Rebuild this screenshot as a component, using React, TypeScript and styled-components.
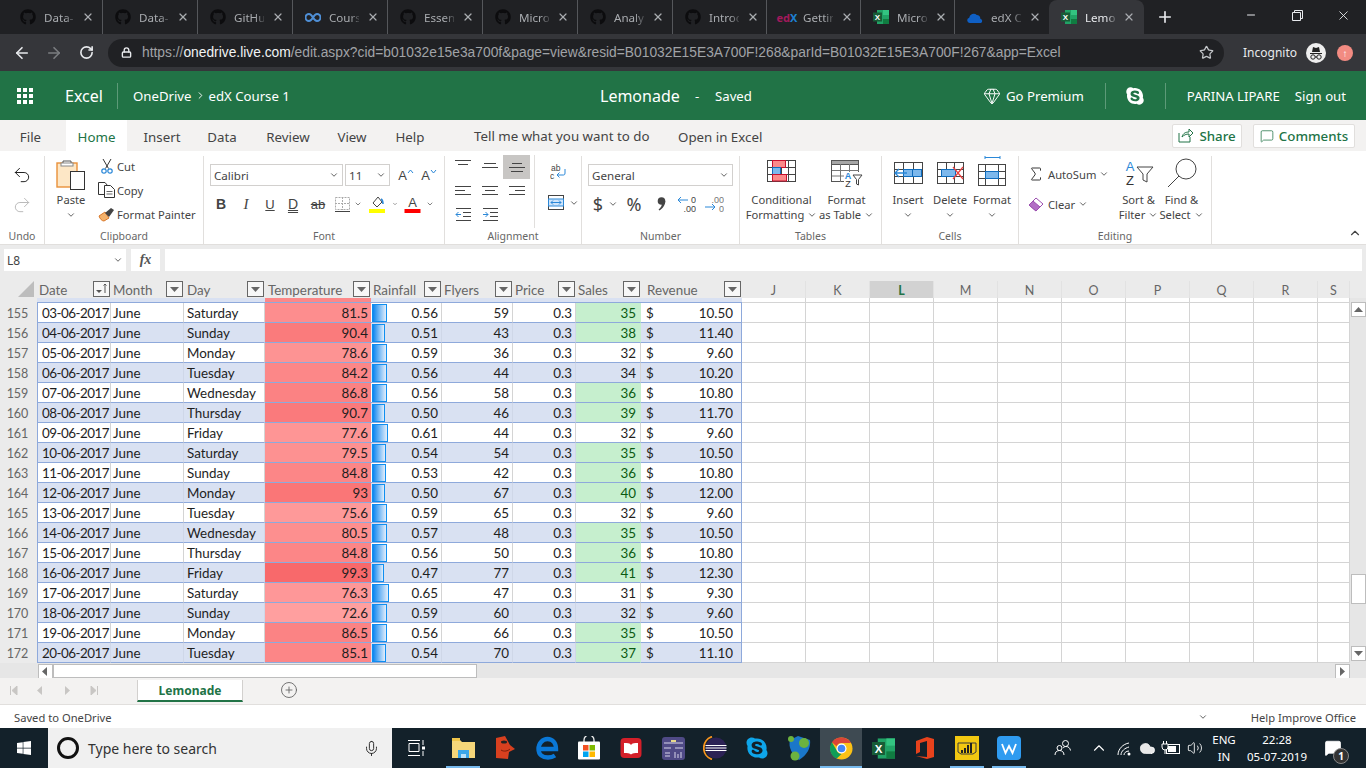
import React from 'react';
import styled, { createGlobalStyle } from 'styled-components';
import {
  ArrowLeft, ArrowRight, RotateCw, Lock, Star, Plus, X, Minus, ChevronDown, ChevronUp, ChevronRight,
  Gem, Mic, Undo2, Redo2, Sigma, Cloud, Volume2, MessageSquare, CirclePlus,
} from 'lucide-react';
import { FaGithub, FaSkype, FaWindows } from 'react-icons/fa';

const UI = `"Noto Sans", "Open Sans", sans-serif`;
const CELL = `Lato, "Liberation Sans", sans-serif`;

const GlobalStyle = createGlobalStyle`
  html, body { margin: 0; padding: 0; background: #fff; overflow: hidden; }
  * { box-sizing: border-box; }
`;

const Page = styled.div`
  width: 1366px;
  height: 768px;
  display: flex;
  flex-direction: column;
  font-family: ${UI};
  overflow: hidden;
`;

/* browser chrome */

const TabStrip = styled.div`
  height: 34px;
  background: #202124;
  display: flex;
  padding-left: 8px;
  flex-shrink: 0;
`;

const BrowserTab = styled.div<{ $active?: boolean; $plain?: boolean; $narrow?: boolean }>`
  width: ${(p) => (p.$narrow ? 94 : 95)}px;
  height: 34px;
  display: flex;
  align-items: center;
  padding-left: 12px;
  gap: 8px;
  background: ${(p) => (p.$active ? '#35363a' : 'transparent')};
  border-radius: ${(p) => (p.$active ? '8px 8px 0 0' : '0')};
  color: ${(p) => (p.$active ? '#e8eaed' : '#a9acb0')};
  border-right: ${(p) => (p.$active || p.$plain ? '1px solid transparent' : '1px solid #55575b')};
`;

const TabIcon = styled.span`
  width: 16px;
  height: 16px;
  display: flex;
  align-items: center;
  justify-content: center;
  flex-shrink: 0;
  font-size: 11px;
  font-weight: 700;
  white-space: nowrap;
`;

const TabTitle = styled.span`
  width: 30px;
  font-size: 11.6px;
  white-space: nowrap;
  mask-image: linear-gradient(to right, #000 70%, rgba(0, 0, 0, 0.25));
`;

const TabClose = styled.span`
  display: flex;
  color: #a9acb0;
`;

const EdPart = styled.span`
  color: #a2195b;
`;

const XPart = styled.span`
  color: #1d7fd1;
`;

const NewTab = styled.span`
  width: 36px;
  margin-left: 3px;
  display: flex;
  align-items: center;
  justify-content: center;
  color: #e8eaed;
`;

const WindowButtons = styled.div`
  margin-left: auto;
  display: flex;
  align-items: flex-start;
  color: #e8eaed;
`;

const WindowButton = styled.span`
  width: 46px;
  height: 30px;
  display: flex;
  align-items: center;
  justify-content: center;
`;

const Toolbar = styled.div`
  height: 37px;
  background: #35363a;
  display: flex;
  align-items: center;
  flex-shrink: 0;
  color: #e8eaed;
  padding-left: 6px;
`;

const NavButton = styled.span<{ $dim?: boolean }>`
  width: 32px;
  display: flex;
  justify-content: center;
  color: ${(p) => (p.$dim ? '#7b7d80' : '#e8eaed')};
`;

const Omnibox = styled.div`
  margin-left: 6px;
  width: 1116px;
  height: 28px;
  border-radius: 14px;
  background: #202124;
  display: flex;
  align-items: center;
  padding: 0 10px 0 13px;
  font-size: 13.8px;
  font-family: "Liberation Sans", sans-serif;
  color: #a0a3a7;
  white-space: nowrap;
`;

const UrlHost = styled.span`
  color: #f1f3f4;
`;

const UrlText = styled.span`
  margin-left: 10px;
  flex: 1;
`;

const IncognitoLabel = styled.span`
  margin-left: 19px;
  font-size: 12px;
  color: #e8eaed;
`;

const IncognitoBadge = styled.span`
  margin-left: 9px;
  width: 20px;
  height: 20px;
  border-radius: 50%;
  background: #eee;
  display: flex;
  align-items: center;
  justify-content: center;
`;

const UpdateBadge = styled.span`
  margin-left: 11px;
  width: 16px;
  height: 16px;
  border-radius: 50%;
  background: #f28b82;
  display: flex;
  align-items: center;
  justify-content: center;
  color: #fff;
  font-size: 10px;
  font-weight: 700;
`;

/* excel online header */

const AppBar = styled.div`
  height: 49px;
  background: #217346;
  color: #fff;
  display: flex;
  align-items: center;
  flex-shrink: 0;
  font-size: 13.2px;
  white-space: nowrap;
`;

const AppZone = styled.div<{ $w: number }>`
  width: ${(p) => p.$w}px;
  display: flex;
  align-items: center;
  flex-shrink: 0;
`;

const Waffle = styled.span`
  margin-left: 17px;
  width: 17px;
  height: 16px;
  display: grid;
  grid-template-columns: repeat(3, 4px);
  grid-auto-rows: 4px;
  gap: 2px;
`;

const WaffleDot = styled.i`
  background: #fff;
`;

const AppName = styled.span`
  margin-left: 31px;
  width: 52px;
  font-size: 16px;
`;

const AppDivider = styled.span<{ $ml?: number }>`
  width: 1px;
  height: 26px;
  background: #5d9a78;
  margin-left: ${(p) => p.$ml ?? 0}px;
`;

const Crumb = styled.span<{ $ml?: number }>`
  display: flex;
  align-items: center;
  gap: 3px;
  margin-left: ${(p) => p.$ml ?? 0}px;
`;

const DocTitle = styled.span`
  font-size: 16px;
  width: 95px;
`;

const AppText = styled.span<{ $w: number }>`
  width: ${(p) => p.$w}px;
`;

/* ribbon tabs */

const MenuRow = styled.div`
  height: 31px;
  background: #f3f2f1;
  display: flex;
  align-items: stretch;
  flex-shrink: 0;
  font-size: 13.3px;
  color: #444;
  padding-left: 10px;
`;

const MenuTab = styled.span<{ $active?: boolean; $w: number }>`
  width: ${(p) => p.$w}px;
  display: flex;
  align-items: center;
  justify-content: center;
  padding-top: 2px;
  background: ${(p) => (p.$active ? '#fff' : 'transparent')};
  color: ${(p) => (p.$active ? '#217346' : '#444')};
`;

const HintText = styled.span<{ $w: number; $up?: boolean }>`
  width: ${(p) => p.$w}px;
  display: flex;
  align-items: center;
  padding-top: ${(p) => (p.$up ? 0 : 2)}px;
  white-space: nowrap;
`;

const MenuAction = styled.span<{ $w: number }>`
  width: ${(p) => p.$w}px;
  height: 24px;
  align-self: center;
  background: #fff;
  border: 1px solid #e1dfdd;
  border-radius: 2px;
  color: #217346;
  font-weight: 500;
  display: flex;
  align-items: center;
  justify-content: center;
  gap: 5px;
  margin-right: 11px;
`;

/* ribbon */

const Ribbon = styled.div`
  height: 93px;
  background: #fff;
  display: flex;
  flex-shrink: 0;
  padding-top: 5px;
  font-size: 11.2px;
  color: #444;
  white-space: nowrap;
`;

const Group = styled.div<{ $w: number }>`
  width: ${(p) => p.$w}px;
  flex-shrink: 0;
  display: flex;
  flex-direction: column;
  border-right: 1px solid #e1dfdd;
`;

const GroupBody = styled.div<{ $pl?: number }>`
  flex: 1;
  display: flex;
  min-height: 0;
  padding-left: ${(p) => p.$pl ?? 0}px;
`;

const GroupLabel = styled.div`
  height: 16px;
  font-size: 10.5px;
  line-height: 17px;
  color: #666;
  text-align: center;
`;

const Collapse = styled.span`
  align-self: flex-end;
  margin: 0 4px 4px auto;
  color: #444;
  display: flex;
`;

const UndoStack = styled.div`
  flex: 1;
  display: flex;
  flex-direction: column;
  align-items: center;
  gap: 10px;
  padding-top: 9px;
`;

const BigButton = styled.div<{ $w: number }>`
  width: ${(p) => p.$w}px;
  display: flex;
  flex-direction: column;
  align-items: center;
  line-height: 15px;
  text-align: center;
  flex-shrink: 0;
`;

const BigIcon = styled.div<{ $pt?: number }>`
  height: 36px;
  display: flex;
  align-items: flex-start;
  justify-content: center;
  padding-top: ${(p) => p.$pt ?? 4}px;
`;

const CaretLine = styled.span`
  display: flex;
  align-items: center;
  justify-content: center;
  gap: 3px;
  height: 15px;
`;

const SmallStack = styled.div`
  display: flex;
  flex-direction: column;
  gap: 6px;
  padding-top: 1px;
`;

const SmallItem = styled.div`
  height: 18px;
  display: flex;
  align-items: center;
  gap: 1px;
`;

const SmallIcon = styled.span`
  width: 19px;
  display: flex;
  justify-content: center;
`;

const ControlColumn = styled.div`
  flex: 1;
  display: flex;
  flex-direction: column;
  padding: 8px 0 0 6px;
`;

const ControlRow = styled.div`
  display: flex;
  align-items: center;
  height: 22px;
`;

const SelectBox = styled.div<{ $w: number }>`
  width: ${(p) => p.$w}px;
  height: 22px;
  margin-right: 2px;
  border: 1px solid #d2d0ce;
  display: flex;
  align-items: center;
  justify-content: space-between;
  padding: 0 3px;
  font-size: 11.6px;
  flex-shrink: 0;
`;

const ToolRow = styled.div`
  display: flex;
  align-items: center;
  height: 24px;
  margin-top: 6px;
`;

const Tool = styled.span<{ $w: number }>`
  width: ${(p) => p.$w}px;
  height: 20px;
  display: flex;
  align-items: center;
  justify-content: center;
  flex-shrink: 0;
  font-family: "Liberation Sans", sans-serif;
  font-size: 13px;
  color: #444;
`;

const BoldTool = styled(Tool)`
  font-weight: 700;
  font-size: 14px;
`;

const ItalicTool = styled(Tool)`
  font-family: "Liberation Serif", serif;
  font-style: italic;
  font-size: 15px;
`;

const UnderTool = styled(Tool)`
  text-decoration: underline;
`;

const DoubleTool = styled(Tool)`
  text-decoration: underline double;
  font-size: 14px;
`;

const StrikeTool = styled(Tool)`
  text-decoration: line-through;
`;

const AlignGrid = styled.div`
  display: grid;
  grid-template-columns: repeat(3, 27px);
  grid-auto-rows: 24px;
  margin: -1px 0 0 4px;
  width: 86px;
  height: 73px;
  border-right: 1px solid #e1dfdd;
`;

const AlignCell = styled.span<{ $on?: boolean }>`
  display: flex;
  align-items: center;
  justify-content: center;
  background: ${(p) => (p.$on ? '#c8c6c4' : 'transparent')};
`;

const WrapColumn = styled.div`
  flex: 1;
  display: flex;
  flex-direction: column;
  align-items: center;
  gap: 14px;
  padding-top: 8px;
`;

const MergeLine = styled.span`
  display: flex;
  align-items: center;
  gap: 5px;
  padding-left: 10px;
`;

const NumberTool = styled(Tool)`
  font-size: 18px;
  font-family: "Noto Sans", sans-serif;
`;

const EditStack = styled.div`
  display: flex;
  flex-direction: column;
  gap: 10px;
  padding: 8px 0 0 8px;
  width: 98px;
  flex-shrink: 0;
`;

const EditItem = styled.div`
  height: 20px;
  display: flex;
  align-items: center;
  gap: 3px;
`;

const EditIcon = styled.span`
  width: 18px;
  display: flex;
  justify-content: center;
`;

/* formula bar */

const Gutter = styled.div`
  height: 4px;
  background: #ebebeb;
  border-top: 1px solid #e1dfdd;
  flex-shrink: 0;
`;

const FormulaBar = styled.div`
  height: 25px;
  background: #ebebeb;
  display: flex;
  align-items: flex-start;
  flex-shrink: 0;
  padding: 1px 4px 0;
  gap: 5px;
`;

const NameBox = styled.div`
  width: 122px;
  height: 22px;
  background: #fff;
  display: flex;
  align-items: center;
  justify-content: space-between;
  padding: 0 3px;
  font-size: 12px;
  color: #444;
`;

const FxBox = styled.div`
  width: 29px;
  height: 22px;
  background: #fff;
  display: flex;
  align-items: center;
  justify-content: center;
  font-family: "Liberation Serif", serif;
  font-style: italic;
  font-weight: 700;
  font-size: 14px;
  color: #555;
`;

const FormulaInput = styled.div`
  flex: 1;
  height: 22px;
  background: #fff;
`;

/* sheet */

const COLUMNS = '37px 74px 73px 81px 106px 71px 71px 63px 65px 101px repeat(9, 64px) 32px';

const Sheet = styled.div`
  height: 405px;
  display: flex;
  flex-direction: column;
  background: #ebebeb;
  flex-shrink: 0;
  font-family: ${CELL};
  font-size: 13.4px;
  color: #1e1e1e;
`;

const HeaderRow = styled.div`
  display: grid;
  grid-template-columns: ${COLUMNS};
  height: 25px;
  flex-shrink: 0;
`;

const Corner = styled.div`
  padding: 8px 0 0 18px;
`;

const TriangleMark = styled.div`
  width: 16px;
  height: 16px;
  background: #bdbdbd;
  clip-path: polygon(100% 0, 100% 100%, 0 100%);
`;

const HeaderCell = styled.div`
  display: flex;
  align-items: flex-end;
  justify-content: space-between;
  padding: 0 1px 0 2px;
  color: #666;
  height: 25px;
`;

const HeaderLabel = styled.span<{ $indent: number }>`
  height: 16px;
  line-height: 16px;
  padding-left: ${(p) => p.$indent}px;
  white-space: nowrap;
`;

const FilterButton = styled.span`
  width: 17px;
  height: 16px;
  margin-bottom: 1px;
  background: #f7f7f7;
  border: 1px solid #666;
  display: flex;
  align-items: center;
  justify-content: center;
  flex-shrink: 0;
`;

const ColumnLetter = styled.div<{ $on?: boolean }>`
  margin-top: 8px;
  height: 17px;
  padding-top: 1px;
  display: flex;
  align-items: center;
  justify-content: center;
  font-size: 12.5px;
  background: ${(p) => (p.$on ? '#d2d2d2' : 'transparent')};
  color: ${(p) => (p.$on ? '#217346' : '#666')};
  font-weight: ${(p) => (p.$on ? 700 : 400)};
  border-right: 1px solid #e2e2e2;
`;

const SheetBody = styled.div`
  flex: 1;
  display: flex;
  min-height: 0;
`;

const Rows = styled.div`
  flex: 1;
  display: flex;
  flex-direction: column;
`;

const Sliver = styled.div`
  display: grid;
  grid-template-columns: ${COLUMNS};
  height: 5px;
  background: #fff;
`;

const SliverHead = styled.div`
  background: #ebebeb;
`;

const SliverTable = styled.div<{ $bg: string }>`
  background: ${(p) => p.$bg};
  border-bottom: 1px solid #8ea9db;
`;

const SliverBlank = styled.div`
  border-right: 1px solid #d4d4d4;
  border-bottom: 1px solid #d4d4d4;
`;

const DataRow = styled.div`
  display: grid;
  grid-template-columns: ${COLUMNS};
  height: 20px;
`;

const RowHead = styled.div`
  background: #ebebeb;
  color: #666;
  font-size: 12.5px;
  display: flex;
  align-items: center;
  justify-content: center;
  padding-right: 2px;
`;

const Cell = styled.div<{ $band?: boolean; $right?: boolean }>`
  background: ${(p) => (p.$band ? '#d9e1f2' : '#fff')};
  border-bottom: 1px solid #8ea9db;
  border-right: 1px solid ${(p) => (p.$band ? '#cfd7e8' : '#d4d4d4')};
  display: flex;
  align-items: center;
  justify-content: ${(p) => (p.$right ? 'flex-end' : 'flex-start')};
  padding: 0 3px 0 2px;
  white-space: nowrap;
`;

const DateCell = styled(Cell)`
  border-left: 1px solid #8ea9db;
  justify-content: flex-end;
  padding-right: 1px;
  letter-spacing: -0.5px;
`;

const DayCell = styled(Cell)`
  padding-left: 3px;
`;

const ScaleCell = styled(Cell)`
  border-right: none;
`;

const BarCell = styled(Cell)`
  justify-content: space-between;
  padding-left: 1px;
`;

const DataBar = styled.span`
  height: 18px;
  border: 1px solid #0f8ef0;
  background: linear-gradient(to right, #0a84f0, #e3eefb);
`;

const SalesCell = styled(Cell)<{ $good: boolean }>`
  background: ${(p) => (p.$good ? '#c6efce' : p.$band ? '#d9e1f2' : '#fff')};
  color: ${(p) => (p.$good ? '#0a5a12' : 'inherit')};
  padding-right: 4px;
  border-right: 1px solid ${(p) => (p.$good ? '#c6efce' : '#d4d4d4')};
`;

const MoneyCell = styled(Cell)`
  justify-content: space-between;
  padding: 0 8px 0 5px;
  border-right: 1px solid #8ea9db;
`;

const BlankCell = styled.div`
  background: #fff;
  border-right: 1px solid #d4d4d4;
  border-bottom: 1px solid #d4d4d4;
`;

const VScroll = styled.div`
  width: 16px;
  background: #e6e6e6;
  display: flex;
  flex-direction: column;
  padding: 4px 0 2px 1px;
`;

const ScrollButton = styled.span`
  width: 15px;
  height: 15px;
  background: #fff;
  border: 1px solid #bdbdbd;
  display: flex;
  align-items: center;
  justify-content: center;
  flex-shrink: 0;
`;

const VThumb = styled.span`
  width: 15px;
  height: 30px;
  background: #fff;
  border: 1px solid #bdbdbd;
  margin-top: 257px;
`;

const ScrollFill = styled.span`
  flex: 1;
`;

const HScroll = styled.div`
  height: 15px;
  flex-shrink: 0;
  background: #e6e6e6;
  display: flex;
  padding: 1px 16px 0 38px;
`;

const HThumb = styled.span`
  width: 424px;
  height: 14px;
  background: #fff;
  border: 1px solid #bdbdbd;
`;

const SheetTabs = styled.div`
  height: 27px;
  background: #f3f2f1;
  border-bottom: 1px solid #e1dfdd;
  display: flex;
  align-items: flex-start;
  flex-shrink: 0;
`;

const TabNav = styled.span`
  width: 27px;
  height: 24px;
  display: flex;
  align-items: center;
  justify-content: center;
  color: #c8c6c4;
`;

const SheetTab = styled.span`
  margin: 2px 0 0 29px;
  width: 106px;
  height: 22px;
  background: #fff;
  border-bottom: 2px solid #217346;
  border-left: 1px solid #d2d0ce;
  border-right: 1px solid #d2d0ce;
  display: flex;
  align-items: center;
  justify-content: center;
  color: #217346;
  font-weight: 700;
  font-size: 12px;
`;

const AddSheet = styled.span`
  margin: 3px 0 0 37px;
  color: #666;
  display: flex;
`;

const StatusBar = styled.div`
  height: 23px;
  background: #fff;
  display: flex;
  align-items: center;
  flex-shrink: 0;
  padding: 1px 10px 0 14px;
  font-size: 11.2px;
  color: #444;
`;

const StatusCaret = styled.span`
  margin-left: auto;
  margin-right: 43px;
  display: flex;
`;

/* taskbar */

const Taskbar = styled.div`
  height: 40px;
  background: #13212a;
  display: flex;
  align-items: stretch;
  flex-shrink: 0;
  color: #fff;
`;

const StartButton = styled.span`
  width: 48px;
  display: flex;
  align-items: center;
  justify-content: center;
`;

const SearchBox = styled.div`
  width: 344px;
  background: #f0f0f0;
  display: flex;
  align-items: center;
  padding: 0 12px 0 9px;
  color: #333;
  font-size: 14px;
`;

const CortanaRing = styled.span`
  width: 22px;
  height: 22px;
  border: 3px solid #111;
  border-radius: 50%;
  margin-right: 9px;
`;

const SearchHint = styled.span`
  flex: 1;
`;

const TaskSlot = styled.span<{ $open?: boolean; $focused?: boolean; $ml?: number }>`
  width: 42px;
  display: flex;
  align-items: center;
  justify-content: center;
  flex-shrink: 0;
  position: relative;
  margin-left: ${(p) => p.$ml ?? 0}px;
  background: ${(p) => (p.$focused ? '#3e4a52' : 'transparent')};

  &::after {
    content: '';
    display: ${(p) => (p.$open ? 'block' : 'none')};
    position: absolute;
    left: ${(p) => (p.$focused ? 0 : 4)}px;
    right: ${(p) => (p.$focused ? 0 : 4)}px;
    bottom: 0;
    height: 2px;
    background: #76b9ed;
  }
`;

const Tray = styled.div`
  margin-left: 20px;
  display: flex;
  align-items: center;
  color: #fff;
`;

const TrayIcon = styled.span<{ $w: number; $ml?: number }>`
  width: ${(p) => p.$w}px;
  margin-left: ${(p) => p.$ml ?? 0}px;
  display: flex;
  justify-content: center;
`;

const TrayText = styled.span<{ $w: number }>`
  width: ${(p) => p.$w}px;
  text-align: center;
  line-height: 17px;
  font-size: 11.5px;
  white-space: nowrap;
`;

const NoticeWrap = styled.span`
  margin-left: 13px;
  position: relative;
  display: flex;
`;

const NoticeBadge = styled.span`
  position: absolute;
  right: -7px;
  bottom: -7px;
  width: 16px;
  height: 16px;
  border-radius: 50%;
  background: #333;
  border: 1px solid #888;
  font-size: 10px;
  font-weight: 700;
  display: flex;
  align-items: center;
  justify-content: center;
`;

/* drawn icons */

const Caret: React.FC = () => <ChevronDown size={10} strokeWidth={2} color="#444" />;

const ExcelMark: React.FC<{ s?: number }> = ({ s = 16 }) => (
  <svg width={s} height={s} viewBox="0 0 16 16">
    <rect x="4" y="1" width="12" height="14" fill="#21a366" />
    <rect x="10" y="1" width="6" height="5" fill="#33c481" />
    <rect x="10" y="10" width="6" height="5" fill="#107c41" />
    <rect x="0" y="3.5" width="9" height="9" fill="#185c37" />
    <text x="4.5" y="10.8" fontSize="8" fontWeight="700" fill="#fff" textAnchor="middle" fontFamily="Liberation Sans">X</text>
  </svg>
);

const AlignLines: React.FC<{ w: number[]; side?: 'l' | 'c' | 'r'; top?: number }> = ({ w, side = 'c', top = 1 }) => (
  <svg width="16" height="16" viewBox="0 0 16 16">
    {w.map((n, i) => {
      const x = side === 'l' ? 0 : side === 'r' ? 16 - n : (16 - n) / 2;
      return <line key={i} x1={x} x2={x + n} y1={top + i * 4 + 0.5} y2={top + i * 4 + 0.5} stroke="#444" />;
    })}
  </svg>
);

const IndentIcon: React.FC<{ dir: 'l' | 'r' }> = ({ dir }) => (
  <svg width="16" height="14" viewBox="0 0 16 14">
    <path d="M1 0.5h15M8 4.5h8M8 8.5h8M1 12.5h15" stroke="#444" fill="none" />
    {dir === 'l'
      ? <path d="M6 6.5H1M3.5 4L1 6.5 3.5 9" stroke="#2b88d8" fill="none" />
      : <path d="M1 6.5h5M3.5 4L6 6.5 3.5 9" stroke="#2b88d8" fill="none" />}
  </svg>
);

const PasteIcon = () => (
  <svg width="30" height="32" viewBox="0 0 30 32">
    <rect x="1" y="4" width="20" height="24" fill="#fde7c6" stroke="#e8913a" strokeWidth="1.4" />
    <path d="M7 5V2h8v3" fill="#fff" stroke="#555" />
    <rect x="5" y="4" width="12" height="3" fill="#fff" stroke="#888" />
    <rect x="14.5" y="12.5" width="14" height="18" fill="#fff" stroke="#333" />
  </svg>
);

const ScissorsIcon = () => (
  <svg width="12" height="15" viewBox="0 0 12 15">
    <path d="M2 0l5.500 9.500M10 0L4.500 9.500" stroke="#333" fill="none" />
    <circle cx="3" cy="12" r="2.2" fill="none" stroke="#2b88d8" strokeWidth="1.2" />
    <circle cx="9" cy="12" r="2.2" fill="none" stroke="#2b88d8" strokeWidth="1.2" />
  </svg>
);

const CopyIcon = () => (
  <svg width="17" height="16" viewBox="0 0 17 16">
    <path d="M6 12.5H0.5v-12H7l2.500 3" fill="#fff" stroke="#333" />
    <path d="M6.500 3.500h6l4 4v8h-10z" fill="#fff" stroke="#333" />
    <path d="M8.500 9.500h6M8.500 12h6" stroke="#666" />
  </svg>
);

const PainterIcon = () => (
  <svg width="17" height="15" viewBox="0 0 17 15">
    <path d="M1 9l6-4 4 6-5 3c-2 0-4-2-5-5z" fill="#f5b26b" stroke="#d9782a" />
    <path d="M7 6l6-5 3 2-5 7" fill="#444" />
  </svg>
);

const BorderIcon = () => (
  <svg width="17" height="17" viewBox="0 0 17 17">
    <rect x="1.5" y="1.5" width="14" height="12" fill="none" stroke="#aaa" strokeDasharray="2 1" />
    <path d="M8.5 1v13M1 7.5h15" stroke="#aaa" strokeDasharray="2 1" />
    <path d="M1 15.5h15" stroke="#444" />
  </svg>
);

const FillIcon = () => (
  <svg width="18" height="18" viewBox="0 0 18 18">
    <path d="M5 8l5-6 4 5-5 5z" fill="#fff" stroke="#444" />
    <path d="M13 4c2 1 2 3 2 5" stroke="#2b88d8" fill="none" strokeWidth="1.5" />
    <rect x="1" y="14" width="16" height="4" fill="#ffff00" />
  </svg>
);

const FontColorIcon = () => (
  <svg width="17" height="18" viewBox="0 0 17 18">
    <text x="8.5" y="12" fontSize="13" textAnchor="middle" fill="#444" fontFamily="Liberation Sans">A</text>
    <rect x="0.5" y="14" width="16" height="4" fill="#ff0000" />
  </svg>
);

const GrowMark: React.FC<{ up?: boolean }> = ({ up }) => (
  <svg width="7" height="12" viewBox="0 0 7 12">
    <path d={up ? 'M1 4l2.5-3L6 4' : 'M1 1l2.5 3L6 1'} stroke="#2b88d8" fill="none" />
  </svg>
);

const WrapIcon = () => (
  <svg width="16" height="17" viewBox="0 0 16 17">
    <text x="1" y="7" fontSize="8.5" fill="#444" fontFamily="Liberation Sans">ab</text>
    <text x="0" y="15" fontSize="8.5" fill="#444" fontFamily="Liberation Sans">c</text>
    <path d="M15 5v4c0 2-1 2-2 2H7M9.5 8.5L7 11l2.5 2.5" stroke="#2b88d8" fill="none" />
  </svg>
);

const MergeIcon = () => (
  <svg width="16" height="15" viewBox="0 0 16 15">
    <rect x="0.5" y="0.5" width="15" height="14" fill="#fff" stroke="#444" />
    <rect x="0.5" y="4" width="15" height="7" fill="#cfe4fa" stroke="#2b88d8" />
    <path d="M3 7.5h10M5 5.5l-2 2 2 2M11 5.5l2 2-2 2" stroke="#2b88d8" fill="none" />
  </svg>
);

const CommaIcon = () => (
  <svg width="9" height="14" viewBox="0 0 9 14">
    <circle cx="4.5" cy="4" r="3.8" fill="#444" />
    <path d="M8.300 4c0 4-2.500 7.500-6 9.500l-.7-1C4 10.500 5 8.500 5 6z" fill="#444" />
  </svg>
);

const DecimalIcon: React.FC<{ inc?: boolean }> = ({ inc }) => (
  <svg width="20" height="18" viewBox="0 0 20 18">
    <text x="20" y="7.500" fontSize="9" textAnchor="end" fill={inc ? '#444' : '#777'} fontFamily="Liberation Sans">{inc ? '0' : '.00'}</text>
    <text x="20" y="16.500" fontSize="9" textAnchor="end" fill={inc ? '#444' : '#777'} fontFamily="Liberation Sans">{inc ? '.00' : '0'}</text>
    {inc
      ? <path d="M12 5H2M5 2L2 5l3 3" stroke="#2b88d8" fill="none" />
      : <path d="M1 12h10M8 9l3 3-3 3" stroke="#2b88d8" fill="none" />}
  </svg>
);

const Lattice: React.FC<{ w?: number; h?: number; cols?: number; rows?: number; children?: React.ReactNode }> = ({ w = 28, h = 21, cols = 4, rows = 3, children }) => (
  <svg width={w + 1} height={h + 1} viewBox={`0 0 ${w + 1} ${h + 1}`}>
    <rect x="0.5" y="0.5" width={w} height={h} fill="#fff" stroke="#444" />
    {Array.from({ length: cols - 1 }, (_, i) => {
      const x = Math.round(((i + 1) * w) / cols) + 0.5;
      return <line key={i} x1={x} x2={x} y1="0" y2={h} stroke="#444" />;
    })}
    {Array.from({ length: rows - 1 }, (_, i) => {
      const y = Math.round(((i + 1) * h) / rows) + 0.5;
      return <line key={i} x1="0" x2={w} y1={y} y2={y} stroke="#444" />;
    })}
    {children}
  </svg>
);

const ConditionalIcon = () => (
  <Lattice>
    <rect x="5.5" y="0.5" width="13" height="7" fill="#fb8a8a" stroke="#c8102e" />
    <rect x="5.5" y="7.5" width="8" height="7" fill="#7db8ec" stroke="#0f6cbd" />
    <rect x="5.5" y="14.5" width="14" height="6.5" fill="#fb8a8a" stroke="#c8102e" />
  </Lattice>
);

const TableStyleIcon = () => (
  <svg width="32" height="30" viewBox="0 0 32 30">
    <rect x="0.5" y="0.5" width="27" height="21" fill="#fff" stroke="#555" />
    <rect x="0.5" y="0.5" width="27" height="4" fill="#a6a6a6" stroke="#555" />
    <path d="M9.5 4v18M18.5 4v18M1 10.500h27M1 16h27" stroke="#777" />
    <rect x="13" y="12" width="19" height="18" fill="#fff" />
    <text x="17" y="19" fontSize="9" fontWeight="700" fill="#2b88d8" textAnchor="middle" fontFamily="Liberation Sans">A</text>
    <text x="17" y="27" fontSize="9" fill="#333" textAnchor="middle" fontFamily="Liberation Sans">Z</text>
    <path d="M22 15h9l-3.5 4.500V25l-2-1v-4.500z" fill="#fff" stroke="#444" />
  </svg>
);

const InsertIcon = () => (
  <Lattice cols={3}>
    <rect x="9.5" y="7.5" width="18" height="7" fill="#7db8ec" stroke="#0f6cbd" />
    <line x1="18.5" x2="18.5" y1="7" y2="15" stroke="#0f6cbd" />
    <path d="M13 11H1M5 7l-4 4 4 4" stroke="#2b88d8" strokeWidth="1.3" fill="none" />
  </Lattice>
);

const DeleteIcon = () => (
  <Lattice w={26} cols={3}>
    <rect x="4.5" y="7.5" width="14" height="7" fill="#7db8ec" stroke="#0f6cbd" />
    <path d="M16 5l10 12M26 5L16 17" stroke="#e8403f" strokeWidth="1.2" />
  </Lattice>
);

const FormatIcon = () => (
  <svg width="29" height="30" viewBox="0 0 29 30">
    <path d="M7 1.5h15M7 0v3M22 0v3" stroke="#2b88d8" />
    <g transform="translate(0,8)">
      <rect x="0.5" y="0.5" width="27" height="21" fill="#fff" stroke="#444" />
      <path d="M7.5 0v22M20.5 0v22M0 7.5h28M0 14.5h28" stroke="#444" />
      <rect x="7.5" y="7.5" width="13" height="7" fill="#7db8ec" stroke="#0f6cbd" />
    </g>
  </svg>
);

const EraserIcon = () => (
  <svg width="17" height="17" viewBox="0 0 17 17">
    <path d="M1 9l7-7 7 6-7 7z" fill="#fff" stroke="#9c4fb0" />
    <path d="M1 9l4-4 7 6-4 4z" fill="#b26fc5" stroke="#9c4fb0" />
  </svg>
);

const SortFilterIcon = () => (
  <svg width="30" height="30" viewBox="0 0 30 30">
    <text x="6" y="12" fontSize="13" fill="#2b88d8" textAnchor="middle" fontFamily="Liberation Sans">A</text>
    <text x="6" y="26" fontSize="13" fill="#333" textAnchor="middle" fontFamily="Liberation Sans">Z</text>
    <path d="M13 8h16l-6 7v8l-4-2v-6z" fill="#fff" stroke="#444" />
  </svg>
);

const FindIcon = () => (
  <svg width="30" height="30" viewBox="0 0 30 30">
    <circle cx="19" cy="11" r="10" fill="#fff" stroke="#444" />
    <path d="M12 18L1 29" stroke="#444" />
  </svg>
);

const ShareIcon = () => (
  <svg width="16" height="15" viewBox="0 0 16 15">
    <path d="M1 5v9h11V9M4 9c1-4 4-5 7-5V1l4 4-4 4V6C8 6 6 7 4 9z" fill="none" stroke="#217346" />
  </svg>
);

const SortMark = () => (
  <svg width="13" height="12" viewBox="0 0 13 12">
    <path d="M1 7h6L4 10z" fill="#555" />
    <path d="M10 1v9M8.5 2.5L10 1l1.5 1.5" stroke="#555" fill="none" />
  </svg>
);

const FilterMark = () => (
  <svg width="9" height="5" viewBox="0 0 9 5">
    <path d="M0 0h9L4.5 5z" fill="#666" />
  </svg>
);

const ArrowMark: React.FC<{ dir: 'up' | 'down' | 'left' | 'right'; c?: string }> = ({ dir, c = '#666' }) => {
  const paths = { up: 'M0 7h9L4.5 2z', down: 'M0 2h9L4.5 7z', left: 'M6 0v9L1 4.5z', right: 'M2 0v9l5-4.5z' };
  return (
    <svg width="9" height="9" viewBox="0 0 9 9">
      <path d={paths[dir]} fill={c} />
    </svg>
  );
};

const RestoreIcon = () => (
  <svg width="11" height="11" viewBox="0 0 11 11">
    <path d="M0.5 2.5h8v8h-8zM2.5 2.5v-2h8v8h-2" fill="none" stroke="#e8eaed" />
  </svg>
);

const HatIcon = () => (
  <svg width="16" height="16" viewBox="0 0 16 16">
    <path d="M2 8h12v1H2zM4 7l1-5 3 1 3-1 1 5z" fill="#222" />
    <circle cx="5" cy="12" r="2.2" fill="none" stroke="#222" />
    <circle cx="11" cy="12" r="2.2" fill="none" stroke="#222" />
    <path d="M7 12h2" stroke="#222" />
  </svg>
);

const OneDriveMark = () => (
  <svg width="18" height="13" viewBox="0 0 18 12.600">
    <path d="M3 12.500a3 3 0 0 1-.5-5.900A5 5 0 0 1 11 3.500a4 4 0 0 1 4 4.200 2.500 2.500 0 0 1 .5 4.800z" fill="#0f5fc4" />
  </svg>
);

const CourseMark = () => (
  <svg width="16" height="9" viewBox="0 0 16 9">
    <path d="M8 4.500C6.500 2 5.500 1 4 1a3.500 3.500 0 0 0 0 7c1.500 0 2.500-1 4-3.500C9.500 2 10.500 1 12 1a3.500 3.500 0 0 1 0 7c-1.500 0-2.500-1-4-3.500z" fill="none" stroke="#4f8fd6" strokeWidth="2" />
  </svg>
);

const TaskViewIcon = () => (
  <svg width="17" height="16" viewBox="0 0 17 16">
    <path d="M0 0.5h12M0 15.5h12M1 3.5h10v8H1zM15 0v5M15 11v5" stroke="#fff" fill="none" />
    <rect x="14" y="6.5" width="3" height="3" fill="#fff" />
  </svg>
);

const ExplorerIcon = () => (
  <svg width="23" height="20" viewBox="0 0 23 20">
    <path d="M0 2h8l2 2h13v16H0z" fill="#f6d77a" />
    <rect x="0" y="0" width="8" height="3" fill="#f0c64a" />
    <path d="M6 12h11v8h-3v-4H9v4H6z" fill="#3aa6e8" />
    <rect x="9" y="16" width="5" height="4" fill="#b8e0f7" />
  </svg>
);

const RedFace = () => (
  <svg width="20" height="24" viewBox="0 0 20 24">
    <path d="M1 2l9-2 5 9 5 4-6 3-1 7-12-1z" fill="#d8401f" />
    <ellipse cx="9" cy="6" rx="3" ry="1.5" fill="#222" />
    <path d="M6 14c3 2 7 1 9-1" stroke="#7a1e0a" fill="none" />
  </svg>
);

const EdgeIcon = () => (
  <svg width="23" height="24" viewBox="0 0 23 24">
    <path d="M3 13h17c0-6-3.500-10-8.500-10S2.500 7.500 2.500 13s4 8.500 9.500 8.500c2.500 0 5-.7 7-2" fill="none" stroke="#0a78d7" strokeWidth="4.400" />
  </svg>
);

const StoreIcon = () => (
  <svg width="24" height="24" viewBox="0 0 24 24">
    <path d="M7 6V4a5 5 0 0 1 10 0v2" stroke="#eee" fill="none" strokeWidth="1.3" />
    <rect x="1" y="5.5" width="22" height="18" rx="1" fill="#fff" />
    <rect x="6" y="9" width="5.5" height="5.5" fill="#f25022" />
    <rect x="12.5" y="9" width="5.5" height="5.5" fill="#7fba00" />
    <rect x="6" y="15.5" width="5.5" height="5.5" fill="#00a4ef" />
    <rect x="12.5" y="15.5" width="5.5" height="5.5" fill="#ffb900" />
  </svg>
);

const BookIcon = () => (
  <svg width="22" height="22" viewBox="0 0 22 22">
    <rect x="0.5" y="1" width="21" height="20" rx="4" fill="#d41f29" />
    <path d="M4 6c3 0 6 0 7 2 1-2 4-2 7-2v10c-3 0-6 0-7 1.500C10 16 7 16 4 16z" fill="#fff" />
  </svg>
);

const SlidersIcon = () => (
  <svg width="23" height="23" viewBox="0 0 23 23">
    <rect width="23" height="23" rx="3" fill="#4f4a86" />
    <path d="M2 6h19M2 11h7M13 11h8M3 16h5M3 19h5M13 15v6M16 17v4M19 15v6" stroke="#d8d4ea" />
    <rect x="9" y="3" width="5" height="2" fill="#e8d98a" />
  </svg>
);

const EclipseIcon = () => (
  <svg width="24" height="24" viewBox="0 0 24 24">
    <path d="M9 .6A12 12 0 0 0 9 23.400" stroke="#f7941e" strokeWidth="1.8" fill="none" />
    <circle cx="13" cy="12" r="10.5" fill="#2c2255" />
    <path d="M2.500 9.500h21M2.500 12h21M2.500 14.500h21" stroke="#fff" strokeWidth="1.2" />
  </svg>
);

const GraphIcon = () => (
  <svg width="24" height="26" viewBox="0 0 24 26">
    <path d="M3 5l8-4 12 4c1 8-3 15-11 20C5 20 1 12 3 5z" fill="#1a77c9" />
    <circle cx="4" cy="4" r="3" fill="#6cb33f" />
    <circle cx="17" cy="8" r="5" fill="#6cb33f" />
    <circle cx="8" cy="21" r="4.5" fill="#6cb33f" />
  </svg>
);

const ChromeIcon = () => (
  <svg width="23" height="23" viewBox="0 0 48 48">
    <circle cx="24" cy="24" r="23" fill="#fbc116" />
    <path d="M24 1a23 23 0 0 1 20 11.500H24a11.500 11.500 0 0 0-10.500 7L4 11A23 23 0 0 1 24 1z" fill="#db4437" />
    <path d="M4 11l10 17a11.500 11.500 0 0 0 10 7.500L14 45A23 23 0 0 1 4 11z" fill="#0f9d58" />
    <circle cx="24" cy="24" r="10.5" fill="#fff" />
    <circle cx="24" cy="24" r="8" fill="#4285f4" />
  </svg>
);

const OfficeIcon = () => (
  <svg width="18" height="22" viewBox="0 0 18 22">
    <path d="M0 4l11-4 7 2v18l-7 2-11-3 11 1V4L4 6v9l-4 2z" fill="#e8421c" />
  </svg>
);

const PowerBiIcon = () => (
  <svg width="24" height="24" viewBox="0 0 24 24">
    <rect width="24" height="24" fill="#f2c811" />
    <path d="M3 7h18v9l-3 2H6l-3-2z" fill="none" stroke="#3a3a3a" />
    <path d="M7 17v-3M10 17v-5M13 17V9M16 17V7" stroke="#222" strokeWidth="2" />
  </svg>
);

const WpsIcon = () => (
  <svg width="24" height="24" viewBox="0 0 24 24">
    <rect width="24" height="24" rx="4" fill="#2f9bf0" />
    <path d="M5 8l3.500 9L12 10l3.500 7L19 8" fill="none" stroke="#fff" strokeWidth="1.8" />
  </svg>
);

const PersonIcon = () => (
  <svg width="18" height="16" viewBox="0 0 18 16">
    <circle cx="11.5" cy="3.5" r="3" fill="none" stroke="#fff" />
    <circle cx="5.5" cy="8" r="2.5" fill="none" stroke="#fff" />
    <path d="M1 15c0-3 2-4.500 4.500-4.500S10 12 10 15M9 8c1-1 2-1.500 3-1.500 2.500 0 4 1.500 4.500 4" fill="none" stroke="#fff" />
  </svg>
);

const BatteryIcon = () => (
  <svg width="20" height="14" viewBox="0 0 20 14">
    <rect x="5.5" y="3.5" width="13" height="9" fill="none" stroke="#fff" />
    <rect x="7" y="5" width="8" height="6" fill="#fff" />
    <path d="M1 3h6v3a3 3 0 0 1-6 0zM2.500 0v3M5.500 0v3M4 9v4" stroke="#fff" fill="#13212a" />
  </svg>
);

const WifiTray = () => (
  <svg width="18" height="16" viewBox="0 0 18 16">
    <path d="M3 15C3 9 8 4 14 3M6 15c0-4 4-7 8-8M9 15c0-2 2-4 5-4" stroke="#fff" fill="none" />
    <circle cx="14" cy="14" r="1.5" fill="#fff" />
  </svg>
);

const FirstMark: React.FC<{ flip?: boolean }> = ({ flip }) => (
  <svg width="9" height="9" viewBox="0 0 9 9">
    <path d={flip ? 'M1 0v9l5-4.500zM7.500 0v9' : 'M8 0v9L3 4.500zM1.500 0v9'} fill="#c8c6c4" stroke="#c8c6c4" strokeWidth="1" />
  </svg>
);

/* data */

type Day = [string, string, number, string, number, number, string];

const DAYS: Day[] = [
  ['03-06-2017', 'Saturday', 81.5, '0.56', 59, 35, '10.50'],
  ['04-06-2017', 'Sunday', 90.4, '0.51', 43, 38, '11.40'],
  ['05-06-2017', 'Monday', 78.6, '0.59', 36, 32, '9.60'],
  ['06-06-2017', 'Tuesday', 84.2, '0.56', 44, 34, '10.20'],
  ['07-06-2017', 'Wednesday', 86.8, '0.56', 58, 36, '10.80'],
  ['08-06-2017', 'Thursday', 90.7, '0.50', 46, 39, '11.70'],
  ['09-06-2017', 'Friday', 77.6, '0.61', 44, 32, '9.60'],
  ['10-06-2017', 'Saturday', 79.5, '0.54', 54, 35, '10.50'],
  ['11-06-2017', 'Sunday', 84.8, '0.53', 42, 36, '10.80'],
  ['12-06-2017', 'Monday', 93, '0.50', 67, 40, '12.00'],
  ['13-06-2017', 'Tuesday', 75.6, '0.59', 65, 32, '9.60'],
  ['14-06-2017', 'Wednesday', 80.5, '0.57', 48, 35, '10.50'],
  ['15-06-2017', 'Thursday', 84.8, '0.56', 50, 36, '10.80'],
  ['16-06-2017', 'Friday', 99.3, '0.47', 77, 41, '12.30'],
  ['17-06-2017', 'Saturday', 76.3, '0.65', 47, 31, '9.30'],
  ['18-06-2017', 'Sunday', 72.6, '0.59', 60, 32, '9.60'],
  ['19-06-2017', 'Monday', 86.5, '0.56', 66, 35, '10.50'],
  ['20-06-2017', 'Tuesday', 85.1, '0.54', 70, 37, '11.10'],
];

const HEADERS: [string, number][] = [
  ['Date', 0], ['Month', 0], ['Day', 1], ['Temperature', 1], ['Rainfall', 0], ['Flyers', 0], ['Price', 0], ['Sales', 0], ['Revenue', 4],
];

const LETTERS = ['J', 'K', 'L', 'M', 'N', 'O', 'P', 'Q', 'R', 'S'];

const heat = (v: number) => {
  const t = Math.min(1, Math.max(0, (v - 72) / 27.3));
  const mix = (a: number, b: number) => Math.round(a + (b - a) * t);
  return `rgb(${mix(255, 248)},${mix(160, 105)},${mix(160, 107)})`;
};

const hub = <FaGithub size={16} color="#0c0c0e" />;

const TABS: { icon: React.ReactNode; title: string }[] = [
  { icon: hub, title: 'Data-' },
  { icon: hub, title: 'Data-' },
  { icon: hub, title: 'GitHu' },
  { icon: <CourseMark />, title: 'Cours' },
  { icon: hub, title: 'Essen' },
  { icon: hub, title: 'Micro' },
  { icon: hub, title: 'Analy' },
  { icon: hub, title: 'Introd' },
  { icon: <><EdPart>ed</EdPart><XPart>X</XPart></>, title: 'Gettin' },
  { icon: <ExcelMark />, title: 'Micro' },
  { icon: <OneDriveMark />, title: 'edX C' },
];

const App: React.FC = () => (
  <Page>
    <GlobalStyle />

    <TabStrip>
      {TABS.map((t, i) => (
        <BrowserTab key={i} $plain={i === TABS.length - 1} $narrow={i >= 7}>
          <TabIcon>{t.icon}</TabIcon>
          <TabTitle>{t.title}</TabTitle>
          <TabClose><X size={12} strokeWidth={2.4} /></TabClose>
        </BrowserTab>
      ))}
      <BrowserTab $active>
        <TabIcon><ExcelMark /></TabIcon>
        <TabTitle>Lemo</TabTitle>
        <TabClose><X size={12} strokeWidth={2.4} /></TabClose>
      </BrowserTab>
      <NewTab><Plus size={18} strokeWidth={2.2} /></NewTab>
      <WindowButtons>
        <WindowButton><Minus size={12} /></WindowButton>
        <WindowButton><RestoreIcon /></WindowButton>
        <WindowButton><X size={15} strokeWidth={1.4} /></WindowButton>
      </WindowButtons>
    </TabStrip>

    <Toolbar>
      <NavButton><ArrowLeft size={18} strokeWidth={2.2} /></NavButton>
      <NavButton $dim><ArrowRight size={18} strokeWidth={2.2} /></NavButton>
      <NavButton><RotateCw size={15} strokeWidth={2.6} /></NavButton>
      <Omnibox>
        <Lock size={11} strokeWidth={3} color="#e8eaed" />
        <UrlText>https://<UrlHost>onedrive.live.com</UrlHost>/edit.aspx?cid=b01032e15e3a700f&amp;page=view&amp;resid=B01032E15E3A700F!268&amp;parId=B01032E15E3A700F!267&amp;app=Excel</UrlText>
        <Star size={15} color="#c4c7ca" />
      </Omnibox>
      <IncognitoLabel>Incognito</IncognitoLabel>
      <IncognitoBadge><HatIcon /></IncognitoBadge>
      <UpdateBadge>↑</UpdateBadge>
    </Toolbar>

    <AppBar>
      <AppZone $w={600}>
        <Waffle>{Array.from({ length: 9 }, (_, i) => <WaffleDot key={i} />)}</Waffle>
        <AppName>Excel</AppName>
        <AppDivider />
        <Crumb $ml={15}>OneDrive <ChevronRight size={11} /> edX Course 1</Crumb>
      </AppZone>
      <AppZone $w={383}>
        <DocTitle>Lemonade</DocTitle>
        <AppText $w={20}>-</AppText>
        <AppText $w={60}>Saved</AppText>
      </AppZone>
      <AppZone $w={383}>
        <Gem size={18} strokeWidth={1.3} />
        <Crumb $ml={5}>Go Premium</Crumb>
        <AppDivider $ml={21} />
        <Crumb $ml={19}><FaSkype size={20} /></Crumb>
        <AppDivider $ml={20} />
        <Crumb $ml={21}>PARINA LIPARE</Crumb>
        <Crumb $ml={15}>Sign out</Crumb>
      </AppZone>
    </AppBar>

    <MenuRow>
      <MenuTab $w={41}>File</MenuTab>
      <MenuTab $w={15} />
      <MenuTab $w={61} $active>Home</MenuTab>
      <MenuTab $w={70}>Insert</MenuTab>
      <MenuTab $w={50}>Data</MenuTab>
      <MenuTab $w={82}>Review</MenuTab>
      <MenuTab $w={46}>View</MenuTab>
      <MenuTab $w={70}>Help</MenuTab>
      <HintText $w={29} />
      <HintText $w={204} $up>Tell me what you want to do</HintText>
      <HintText $w={494}>Open in Excel</HintText>
      <MenuAction $w={70}><ShareIcon />Share</MenuAction>
      <MenuAction $w={102}><MessageSquare size={14} strokeWidth={1.3} />Comments</MenuAction>
    </MenuRow>

    <Ribbon>
      <Group $w={45}>
        <GroupBody>
          <UndoStack>
            <Undo2 size={20} strokeWidth={1.2} color="#222" />
            <Redo2 size={20} strokeWidth={1.2} color="#bbb" />
          </UndoStack>
        </GroupBody>
        <GroupLabel>Undo</GroupLabel>
      </Group>

      <Group $w={159}>
        <GroupBody>
          <BigButton $w={52}>
            <BigIcon $pt={3}><PasteIcon /></BigIcon>
            <span>Paste</span>
            <CaretLine><Caret /></CaretLine>
          </BigButton>
          <SmallStack>
            <SmallItem><SmallIcon><ScissorsIcon /></SmallIcon>Cut</SmallItem>
            <SmallItem><SmallIcon><CopyIcon /></SmallIcon>Copy</SmallItem>
            <SmallItem><SmallIcon><PainterIcon /></SmallIcon>Format Painter</SmallItem>
          </SmallStack>
        </GroupBody>
        <GroupLabel>Clipboard</GroupLabel>
      </Group>

      <Group $w={241}>
        <GroupBody>
          <ControlColumn>
            <ControlRow>
              <SelectBox $w={133}>Calibri<Caret /></SelectBox>
              <SelectBox $w={45}>11<Caret /></SelectBox>
              <Tool $w={28}>A<GrowMark up /></Tool>
              <Tool $w={18}>A<GrowMark /></Tool>
            </ControlRow>
            <ToolRow>
              <BoldTool $w={22}>B</BoldTool>
              <ItalicTool $w={28}>I</ItalicTool>
              <UnderTool $w={20}>U</UnderTool>
              <DoubleTool $w={26}>D</DoubleTool>
              <StrikeTool $w={24}>ab</StrikeTool>
              <Tool $w={24}><BorderIcon /></Tool>
              <Tool $w={8}><Caret /></Tool>
              <Tool $w={30}><FillIcon /></Tool>
              <Tool $w={6}><Caret /></Tool>
              <Tool $w={28}><FontColorIcon /></Tool>
              <Tool $w={8}><Caret /></Tool>
            </ToolRow>
          </ControlColumn>
        </GroupBody>
        <GroupLabel>Font</GroupLabel>
      </Group>

      <Group $w={137}>
        <GroupBody>
          <AlignGrid>
            <AlignCell><AlignLines w={[16, 10]} top={1} /></AlignCell>
            <AlignCell><AlignLines w={[12, 16]} top={4} /></AlignCell>
            <AlignCell $on><AlignLines w={[10, 16, 12]} top={4} /></AlignCell>
            <AlignCell><AlignLines w={[16, 10, 16]} side="l" top={3} /></AlignCell>
            <AlignCell><AlignLines w={[16, 10, 16]} top={3} /></AlignCell>
            <AlignCell><AlignLines w={[16, 10, 16]} side="r" top={3} /></AlignCell>
            <AlignCell><IndentIcon dir="l" /></AlignCell>
            <AlignCell><IndentIcon dir="r" /></AlignCell>
          </AlignGrid>
          <WrapColumn>
            <WrapIcon />
            <MergeLine><MergeIcon /><Caret /></MergeLine>
          </WrapColumn>
        </GroupBody>
        <GroupLabel>Alignment</GroupLabel>
      </Group>

      <Group $w={158}>
        <GroupBody>
          <ControlColumn>
            <ControlRow>
              <SelectBox $w={145}>General<Caret /></SelectBox>
            </ControlRow>
            <ToolRow>
              <NumberTool $w={20}>$</NumberTool>
              <Tool $w={10}><Caret /></Tool>
              <NumberTool $w={32}>%</NumberTool>
              <Tool $w={22}><CommaIcon /></Tool>
              <Tool $w={28}><DecimalIcon inc /></Tool>
              <Tool $w={28}><DecimalIcon /></Tool>
            </ToolRow>
          </ControlColumn>
        </GroupBody>
        <GroupLabel>Number</GroupLabel>
      </Group>

      <Group $w={142}>
        <GroupBody $pl={9}>
          <BigButton $w={65}>
            <BigIcon><ConditionalIcon /></BigIcon>
            <span>Conditional</span>
            <CaretLine>Formatting <Caret /></CaretLine>
          </BigButton>
          <BigButton $w={65}>
            <BigIcon><TableStyleIcon /></BigIcon>
            <span>Format</span>
            <CaretLine>as Table <Caret /></CaretLine>
          </BigButton>
        </GroupBody>
        <GroupLabel>Tables</GroupLabel>
      </Group>

      <Group $w={137}>
        <GroupBody $pl={5}>
          <BigButton $w={42}>
            <BigIcon $pt={6}><InsertIcon /></BigIcon>
            <span>Insert</span>
            <CaretLine><Caret /></CaretLine>
          </BigButton>
          <BigButton $w={42}>
            <BigIcon $pt={6}><DeleteIcon /></BigIcon>
            <span>Delete</span>
            <CaretLine><Caret /></CaretLine>
          </BigButton>
          <BigButton $w={42}>
            <BigIcon $pt={0}><FormatIcon /></BigIcon>
            <span>Format</span>
            <CaretLine><Caret /></CaretLine>
          </BigButton>
        </GroupBody>
        <GroupLabel>Cells</GroupLabel>
      </Group>

      <Group $w={193}>
        <GroupBody>
          <EditStack>
            <EditItem><EditIcon><Sigma size={18} strokeWidth={1.3} color="#333" /></EditIcon>AutoSum <Caret /></EditItem>
            <EditItem><EditIcon><EraserIcon /></EditIcon>Clear <Caret /></EditItem>
          </EditStack>
          <BigButton $w={43}>
            <BigIcon $pt={3}><SortFilterIcon /></BigIcon>
            <span>Sort &amp;</span>
            <CaretLine>Filter <Caret /></CaretLine>
          </BigButton>
          <BigButton $w={43}>
            <BigIcon $pt={2}><FindIcon /></BigIcon>
            <span>Find &amp;</span>
            <CaretLine>Select <Caret /></CaretLine>
          </BigButton>
        </GroupBody>
        <GroupLabel>Editing</GroupLabel>
      </Group>
      <Collapse><ChevronUp size={14} /></Collapse>
    </Ribbon>

    <Gutter />
    <FormulaBar>
      <NameBox>L8<Caret /></NameBox>
      <FxBox>fx</FxBox>
      <FormulaInput />
    </FormulaBar>

    <Sheet>
      <HeaderRow>
        <Corner><TriangleMark /></Corner>
        {HEADERS.map(([name, indent], i) => (
          <HeaderCell key={name}>
            <HeaderLabel $indent={indent}>{name}</HeaderLabel>
            <FilterButton>{i === 0 ? <SortMark /> : <FilterMark />}</FilterButton>
          </HeaderCell>
        ))}
        {LETTERS.map((l) => <ColumnLetter key={l} $on={l === 'L'}>{l}</ColumnLetter>)}
      </HeaderRow>

      <SheetBody>
        <Rows>
          <Sliver>
            <SliverHead />
            <SliverTable $bg="#d9e1f2" />
            <SliverTable $bg="#d9e1f2" />
            <SliverTable $bg="#d9e1f2" />
            <SliverTable $bg={heat(84)} />
            <SliverTable $bg="#d9e1f2" />
            <SliverTable $bg="#d9e1f2" />
            <SliverTable $bg="#d9e1f2" />
            <SliverTable $bg="#d9e1f2" />
            <SliverTable $bg="#d9e1f2" />
            {LETTERS.map((l) => <SliverBlank key={l} />)}
          </Sliver>
          {DAYS.map(([date, day, temp, rain, flyers, sales, revenue], i) => {
            const band = i % 2 === 1;
            return (
              <DataRow key={date}>
                <RowHead>{155 + i}</RowHead>
                <DateCell $band={band}>{date}</DateCell>
                <Cell $band={band}>June</Cell>
                <DayCell $band={band}>{day}</DayCell>
                <ScaleCell $right style={{ background: heat(temp) }}>{temp}</ScaleCell>
                <BarCell $band={band}>
                  <DataBar style={{ width: Math.round(Number(rain) * 26) }} />
                  {rain}
                </BarCell>
                <Cell $band={band} $right>{flyers}</Cell>
                <Cell $band={band} $right>0.3</Cell>
                <SalesCell $band={band} $right $good={sales >= 35}>{sales}</SalesCell>
                <MoneyCell $band={band}><span>$</span><span>{revenue}</span></MoneyCell>
                {LETTERS.map((l) => <BlankCell key={l} />)}
              </DataRow>
            );
          })}
        </Rows>
        <VScroll>
          <ScrollButton><ArrowMark dir="up" /></ScrollButton>
          <VThumb />
          <ScrollFill />
          <ScrollButton><ArrowMark dir="down" /></ScrollButton>
        </VScroll>
      </SheetBody>

      <HScroll>
        <ScrollButton><ArrowMark dir="left" /></ScrollButton>
        <HThumb />
        <ScrollFill />
        <ScrollButton><ArrowMark dir="right" /></ScrollButton>
      </HScroll>
    </Sheet>

    <SheetTabs>
      <TabNav><FirstMark /></TabNav>
      <TabNav><ArrowMark dir="left" c="#c8c6c4" /></TabNav>
      <TabNav><ArrowMark dir="right" c="#c8c6c4" /></TabNav>
      <TabNav><FirstMark flip /></TabNav>
      <SheetTab>Lemonade</SheetTab>
      <AddSheet><CirclePlus size={18} strokeWidth={1.2} /></AddSheet>
    </SheetTabs>

    <StatusBar>
      Saved to OneDrive
      <StatusCaret><Caret /></StatusCaret>
      Help Improve Office
    </StatusBar>

    <Taskbar>
      <StartButton><FaWindows size={16} /></StartButton>
      <SearchBox>
        <CortanaRing />
        <SearchHint>Type here to search</SearchHint>
        <Mic size={17} strokeWidth={1.3} color="#222" />
      </SearchBox>
      <TaskSlot $ml={3}><TaskViewIcon /></TaskSlot>
      <TaskSlot $ml={5} $open><ExplorerIcon /></TaskSlot>
      <TaskSlot><RedFace /></TaskSlot>
      <TaskSlot><EdgeIcon /></TaskSlot>
      <TaskSlot><StoreIcon /></TaskSlot>
      <TaskSlot><BookIcon /></TaskSlot>
      <TaskSlot><SlidersIcon /></TaskSlot>
      <TaskSlot><EclipseIcon /></TaskSlot>
      <TaskSlot><FaSkype size={24} color="#0ea5ea" /></TaskSlot>
      <TaskSlot><GraphIcon /></TaskSlot>
      <TaskSlot $open $focused><ChromeIcon /></TaskSlot>
      <TaskSlot><ExcelMark s={23} /></TaskSlot>
      <TaskSlot><OfficeIcon /></TaskSlot>
      <TaskSlot $open><PowerBiIcon /></TaskSlot>
      <TaskSlot $open><WpsIcon /></TaskSlot>
      <Tray>
        <TrayIcon $w={26}><PersonIcon /></TrayIcon>
        <TrayIcon $w={24} $ml={11}><ChevronUp size={18} strokeWidth={1.5} /></TrayIcon>
        <TrayIcon $w={26}><WifiTray /></TrayIcon>
        <TrayIcon $w={20}><Cloud size={17} fill="#e8e8e8" strokeWidth={1} /></TrayIcon>
        <TrayIcon $w={28}><BatteryIcon /></TrayIcon>
        <TrayIcon $w={20}><Volume2 size={16} strokeWidth={1.3} /></TrayIcon>
        <TrayText $w={38}>ENG<br />IN</TrayText>
        <TrayText $w={68}>22:28<br />05-07-2019</TrayText>
        <NoticeWrap>
          <MessageSquare size={18} fill="#fff" strokeWidth={1} />
          <NoticeBadge>1</NoticeBadge>
        </NoticeWrap>
      </Tray>
    </Taskbar>
  </Page>
);

export default App;
